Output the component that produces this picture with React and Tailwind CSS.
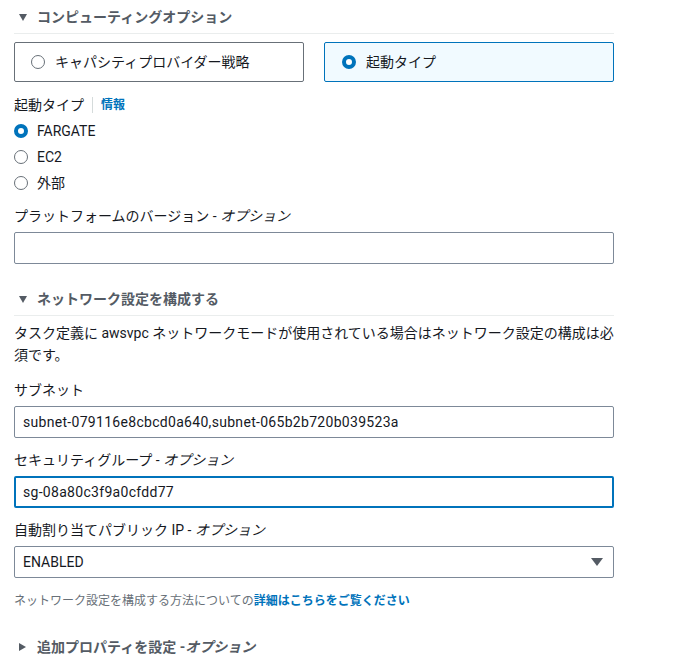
import React from "react";

const FONT = { fontFamily: 'Roboto, "Noto Sans CJK JP", sans-serif' };

function Radio({ checked }) {
  return checked ? (
    <span className="inline-block w-[14px] h-[14px] rounded-full border-[4px] border-[#0073bb] bg-white shrink-0" />
  ) : (
    <span className="inline-block w-[14px] h-[14px] rounded-full border border-[#687078] bg-white shrink-0" />
  );
}

function SectionHeader({ open, children }) {
  return (
    <div className="flex items-center h-[22px] text-[14px] font-bold text-[#545b64]">
      <span className="w-[23px] pl-[5px] flex items-center">
        {open ? (
          <svg width="8" height="7" viewBox="0 0 8 7">
            <path d="M0 0 H8 L4 7 Z" fill="#545b64" />
          </svg>
        ) : (
          <svg width="7" height="8" viewBox="0 0 7 8">
            <path d="M0 0 V8 L7 4 Z" fill="#545b64" />
          </svg>
        )}
      </span>
      <span>{children}</span>
    </div>
  );
}

function Label({ children, className = "" }) {
  return <div className={"h-[22px] leading-[22px] text-[14px] text-[#16191f] " + className}>{children}</div>;
}

function Opt({ children }) {
  return <span className="italic">{children}</span>;
}

function Input({ value, focused }) {
  return (
    <div
      className={
        "h-[32px] rounded-[2px] flex items-center text-[14px] tracking-[0.3px] text-[#16191f] " +
        (focused ? "border-2 border-[#0073bb] pl-[7px]" : "border border-[#7d8998] pl-[8px]")
      }
    >
      {value}
    </div>
  );
}

export default function App() {
  return (
    <div className="bg-white w-[680px] h-[669px] pl-[14px] overflow-hidden" style={FONT}>
      <div className="w-[600px]">
        <div className="pt-[6px] pb-[5px] border-b border-[#eaeded]">
          <SectionHeader open>コンピューティングオプション</SectionHeader>
        </div>
        <div className="grid grid-cols-2 gap-[20px] mt-[8px]">
          <div className="h-[40px] border border-[#687078] rounded-[2px] flex items-center pl-[16px] gap-[10px] text-[14px] text-[#16191f]">
            <Radio />
            <span>キャパシティプロバイダー戦略</span>
          </div>
          <div className="h-[40px] border border-[#0073bb] bg-[#f1faff] rounded-[2px] flex items-center pl-[17px] gap-[10px] text-[14px] text-[#16191f]">
            <Radio checked />
            <span>起動タイプ</span>
          </div>
        </div>

        <div className="mt-[12px] flex items-center h-[22px] text-[14px] text-[#16191f]">
          <span>起動タイプ</span>
          <span className="mx-[8px] w-px h-[16px] bg-[#d5dbdb]" />
          <span className="text-[12px] font-bold text-[#0073bb]">情報</span>
        </div>
        <div className="mt-[2px]">
          {[
            ["FARGATE", true],
            ["EC2", false],
            ["外部", false],
          ].map(([t, c]) => (
            <div key={t} className="h-[26px] flex items-center gap-[9px] text-[14px] text-[#16191f]">
              <Radio checked={c} />
              <span>{t}</span>
            </div>
          ))}
        </div>

        <Label className="mt-[9px]">
          プラットフォームのバージョン - <Opt>オプション</Opt>
        </Label>
        <div className="mt-[5px]">
          <Input value="" />
        </div>

        <div className="mt-[24px] pb-[5px] border-b border-[#eaeded]">
          <SectionHeader open>ネットワーク設定を構成する</SectionHeader>
        </div>
        <p className="mt-[6px] text-[14px] leading-[22px] text-[#16191f] w-[680px]">
          <span className="whitespace-nowrap">タスク定義に awsvpc ネットワークモードが使用されている場合はネットワーク設定の構成は必</span>
          <br />
          須です。
        </p>

        <Label className="mt-[13px]">サブネット</Label>
        <div className="mt-[5px]">
          <Input value="subnet-079116e8cbcd0a640,subnet-065b2b720b039523a" />
        </div>

        <Label className="mt-[11px]">
          セキュリティグループ - <Opt>オプション</Opt>
        </Label>
        <div className="mt-[5px]">
          <Input value="sg-08a80c3f9a0cfdd77" focused />
        </div>

        <Label className="mt-[11px]">
          自動割り当てパブリック IP - <Opt>オプション</Opt>
        </Label>
        <div className="mt-[5px] h-[32px] rounded-[2px] border border-[#7d8998] flex items-center justify-between pl-[8px] pr-[10px] text-[14px] text-[#16191f]">
          <span>ENABLED</span>
          <svg width="12" height="8" viewBox="0 0 12 8">
            <path d="M0 0 H12 L6 8 Z" fill="#545b64" />
          </svg>
        </div>

        <div className="mt-[15px] h-[16px] leading-[16px] text-[12px] text-[#687078]">
          ネットワーク設定を構成する方法についての<span className="font-bold text-[#0073bb]">詳細はこちらをご覧ください</span>
        </div>

        <div className="mt-[27px]">
          <SectionHeader>追加プロパティを設定 -<Opt>オプション</Opt></SectionHeader>
        </div>
      </div>
    </div>
  );
}
